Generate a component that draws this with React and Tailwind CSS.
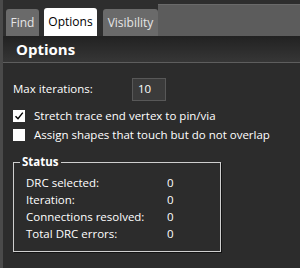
import React from 'react';

const font = { fontFamily: '"Open Sans", "Noto Sans", sans-serif' };

function Tab({ label, active, className = '' }) {
  return (
    <div
      className={`h-full flex items-center justify-center rounded-t-[3px] text-[12px] ${
        active ? 'bg-white text-black' : 'bg-[#6a6a6a] text-[#e6e6e6] mt-[1px]'
      } ${className}`}
    >
      {label}
    </div>
  );
}

function Check({ checked, label }) {
  return (
    <div className="flex items-center gap-[9px] h-[19px]">
      <div className="w-[12px] h-[12px] bg-white flex items-center justify-center">
        {checked && (
          <svg width="10" height="10" viewBox="0 0 10 10">
            <path d="M1.5 5.2 L4 7.8 L8.8 1.6" fill="none" stroke="#000" strokeWidth="1.4" />
          </svg>
        )}
      </div>
      <span className="text-[11.5px] text-white">{label}</span>
    </div>
  );
}

export default function App() {
  const rows = [
    ['DRC selected:', '0'],
    ['Iteration:', '0'],
    ['Connections resolved:', '0'],
    ['Total DRC errors:', '0'],
  ];
  return (
    <div className="w-[300px] h-[268px] bg-[#2c2c2c] flex overflow-hidden" style={font}>
      <div className="w-[3px] bg-[#4a4a4a]" />
      <div className="flex-1 flex flex-col">
        <div className="h-[36px] flex items-end bg-[#2e2e2e] pl-[3px]">
          <div className="h-[27px] flex items-end">
            <Tab label="Find" className="w-[33px] h-[26px]" />
          </div>
          <div className="w-[5px]" />
          <div className="h-[28px] flex">
            <Tab label="Options" active className="w-[53px]" />
          </div>
          <div className="w-[6px]" />
          <div className="h-[27px] flex items-end">
            <Tab label="Visibility" className="w-[55px] h-[26px]" />
          </div>
          <div className="flex-1 h-[32px] bg-[#5c5c5c] border-t border-[#6a6a6a]" />
        </div>
        <div className="h-[27px] bg-gradient-to-b from-[#222222] to-[#363636] border-b border-[#5e5e5e] flex items-center pl-[13px]">
          <span className="text-[15px] font-bold text-white">Options</span>
        </div>
        <div className="flex-1 flex flex-col pl-[10px] pt-[14px]">
          <div className="flex items-center h-[24px]">
            <span className="text-[11.5px] text-white w-[119px]">Max iterations:</span>
            <div className="w-[34px] h-[23px] bg-[#3b3b3b] border border-[#585858] flex items-center pl-[5px] text-[11.5px] text-white">
              10
            </div>
          </div>
          <div className="mt-[5px] flex flex-col">
            <Check checked label="Stretch trace end vertex to pin/via" />
            <Check label="Assign shapes that touch but do not overlap" />
          </div>
          <div className="relative mt-[18px] w-[208px] h-[90px] border border-[#cfcfcf] shadow-[1px_1px_0_#111]">
            <span className="absolute -top-[10px] left-[6px] px-[2px] bg-[#2c2c2c] text-[11.5px] font-bold text-white">
              Status
            </span>
            <div className="pt-[11px] pl-[12px] flex flex-col">
              {rows.map(([k, v]) => (
                <div key={k} className="flex h-[17px] items-center text-[11.5px] text-white">
                  <span className="w-[141px]">{k}</span>
                  <span>{v}</span>
                </div>
              ))}
            </div>
          </div>
        </div>
      </div>
    </div>
  );
}
